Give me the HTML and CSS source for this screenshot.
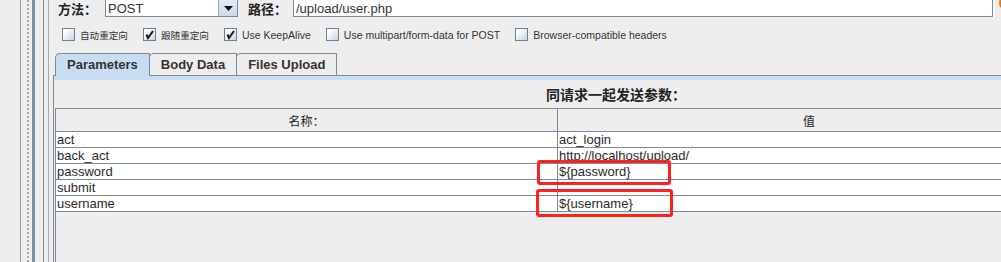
FILE: index.html
```html
<!DOCTYPE html>
<html lang="zh">
<head>
    <meta charset="UTF-8">
    <title>HTTP 请求</title>
    <link rel="stylesheet" href="styles.css">
</head>
<body>
    <div class="frame">
        <!-- Bordures de l'arbre à gauche -->
        <div class="side">
            <div class="side-a"></div>
            <div class="side-b"></div>
            <div class="side-c"></div>
            <div class="side-d"></div>
            <div class="side-e"></div>
        </div>

        <div class="main">
            <div class="toprow">
                <span class="field-label label-method">方法：</span>
                <div class="combo">
                    <span class="combo-value">POST</span>
                    <span class="combo-btn">
                        <svg width="9" height="5" viewBox="0 0 9 5"><path d="M0 0H9L4.5 5Z" fill="#111"/></svg>
                    </span>
                </div>
                <span class="field-label label-path">路径：</span>
                <div class="path-field">/upload/user.php</div>
                <span class="corner-icon"></span>
            </div>

            <div class="options">
                <label class="opt"><span class="box"></span><span class="zh">自动重定向</span></label>
                <label class="opt"><span class="box"><svg width="11" height="11" viewBox="0 0 11 11"><path d="M2.5 5.5L4 9L9 2" fill="none" stroke="#1a1a1a" stroke-width="2"/></svg></span><span class="zh">跟随重定向</span></label>
                <label class="opt"><span class="box"><svg width="11" height="11" viewBox="0 0 11 11"><path d="M2.5 5.5L4 9L9 2" fill="none" stroke="#1a1a1a" stroke-width="2"/></svg></span>Use KeepAlive</label>
                <label class="opt"><span class="box"></span>Use multipart/form-data for POST</label>
                <label class="opt"><span class="box"></span>Browser-compatible headers</label>
            </div>

            <div class="tabs">
                <div class="tab active">Parameters</div>
                <div class="tab">Body Data</div>
                <div class="tab">Files Upload</div>
            </div>

            <div class="panel">
                <div class="panel-band"></div>
                <div class="panel-title">同请求一起发送参数：</div>
                <div class="scroll">
                    <table class="params">
                        <tr>
                            <th class="col-name">名称：</th>
                            <th>值</th>
                        </tr>
                        <tr><td>act</td><td>act_login</td></tr>
                        <tr><td>back_act</td><td>http://localhost/upload/</td></tr>
                        <tr><td>password</td><td>${password}</td></tr>
                        <tr><td>submit</td><td></td></tr>
                        <tr><td>username</td><td>${username}</td></tr>
                    </table>
                </div>
            </div>

            <!-- Annotations rouges -->
            <div class="mark mark-1"></div>
            <div class="mark mark-2"></div>
        </div>
    </div>
</body>
</html>
```

FILE: styles.css
```css
body {
    margin: 0;
    background: #eeeeee;
    font-family: "Liberation Sans", "Noto Sans CJK SC", sans-serif;
    color: #333;
}
.frame {
    display: flex;
    height: 262px;
    overflow: hidden;
}
.side {
    display: flex;
    flex: none;
    width: 53px;
}
.side-a {
    width: 20px;
    border-right: 1px solid #a0a0a0;
}
.side-b {
    width: 6px;
    border-right: 2px dotted #a8a8a8;
}
.side-c {
    margin-left: 3px;
    border-left: 3px solid #7d8fa5;
}
.side-d {
    margin-left: 8px;
    border-left: 1px solid #7a8a99;
}
.side-e {
    margin-left: 4px;
    border-left: 1px solid #a8a8a8;
}
.main {
    position: relative;
    flex: 1;
    min-width: 0;
}
.toprow {
    display: flex;
    align-items: center;
    height: 21px;
    margin-top: -4px;
}
.toprow > * {
    flex: none;
}
.field-label {
    font-family: "Noto Sans CJK SC", sans-serif;
    font-weight: bold;
    font-size: 13px;
    line-height: 12px;
    padding-top: 4px;
    color: #222;
}
.label-method {
    margin-left: 5px;
    width: 47px;
}
.label-path {
    margin-left: 10px;
    width: 45px;
}
.combo {
    display: flex;
    width: 133px;
    height: 21px;
    box-sizing: border-box;
    border: 1px solid #7a8a99;
    background: #fff;
}
.combo-value {
    flex: 1;
    padding: 5px 0 0 2px;
    font-size: 13px;
    line-height: 13px;
}
.combo-btn {
    width: 19px;
    border-left: 1px solid #9aaabb;
    background: linear-gradient(#e8eff7, #cbd9e8);
    display: flex;
    align-items: center;
    justify-content: center;
    padding-top: 4px;
    box-sizing: border-box;
}
.path-field {
    width: 700px;
    height: 21px;
    box-sizing: border-box;
    border: 1px solid #7a8a99;
    background: #fff;
    box-shadow: 2px 0 0 #fafafa;
    padding: 5px 0 0 2px;
    font-size: 13px;
    line-height: 13px;
}
.corner-icon {
    align-self: flex-start;
    margin-left: 6px;
    width: 10px;
    height: 10px;
    border: 2px solid #e0781e;
    border-radius: 50%;
}
.options {
    display: flex;
    align-items: center;
    gap: 15px;
    height: 13px;
    margin-top: 11px;
    padding-left: 9px;
    font-size: 10.5px;
}
.opt {
    display: flex;
    align-items: center;
    gap: 5px;
    white-space: nowrap;
}
.zh {
    font-size: 9.6px;
}
.box {
    display: flex;
    align-items: center;
    justify-content: center;
    width: 13px;
    height: 13px;
    box-sizing: border-box;
    border: 1px solid #6f7f90;
    background: linear-gradient(135deg, #ffffff 20%, #c5d4e4);
}
.tabs {
    position: relative;
    z-index: 1;
    display: flex;
    align-items: flex-start;
    height: 22px;
    margin-top: 12px;
    padding-left: 2px;
}
.tab {
    height: 22px;
    box-sizing: border-box;
    padding: 0 11px;
    border: 1px solid #7a8a99;
    border-bottom: none;
    border-top-left-radius: 5px;
    background: #eeeeee;
    font-size: 13px;
    font-weight: bold;
    line-height: 21px;
    color: #333;
}
.tab + .tab {
    margin-left: -1px;
}
.tab.active {
    height: 23px;
    background: #c8ddf2;
}
.panel {
    width: 1124px;
    border-left: 1px solid #7a8a99;
    border-top: 1px solid #7a8a99;
}
.panel-band {
    height: 4px;
    background: #c8ddf2;
}
.panel-title {
    height: 28px;
    line-height: 28px;
    text-align: center;
    font-family: "Noto Sans CJK SC", sans-serif;
    font-weight: bold;
    font-size: 14px;
    color: #222;
}
.scroll {
    height: 200px;
    margin-left: 1px;
    border-left: 1px solid #7a8a99;
    border-top: 1px solid #7a8a99;
}
.params {
    width: 1004px;
    table-layout: fixed;
    border-spacing: 0;
}
.params th {
    height: 23px;
    box-sizing: border-box;
    padding: 0;
    background: #eeeeee;
    border-bottom: 1px solid #7a8a99;
    font-family: "Noto Sans CJK SC", sans-serif;
    font-weight: normal;
    font-size: 12px;
    color: #222;
}
.params td {
    height: 16px;
    box-sizing: border-box;
    padding: 0 0 0 1px;
    background: #fff;
    border-bottom: 1px solid #7a8a99;
    font-size: 13px;
    line-height: 15px;
    color: #2a2a2a;
    white-space: nowrap;
    overflow: hidden;
}
.params th:first-child,
.params td:first-child {
    border-right: 1px solid #7a8a99;
}
.col-name {
    width: 502px;
}
.mark {
    position: absolute;
    box-sizing: border-box;
    border: 3px solid #ff2020;
    border-radius: 3px;
}
.mark-1 {
    left: 484px;
    top: 160px;
    width: 134px;
    height: 25px;
}
.mark-2 {
    left: 483px;
    top: 189px;
    width: 137px;
    height: 28px;
}
```
